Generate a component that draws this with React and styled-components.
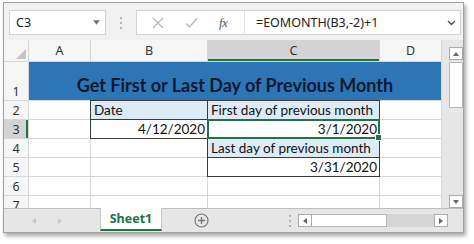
import React from "react";
import styled, { createGlobalStyle, css } from "styled-components";

const GREEN = "#217346";
const GRID = "#d6d6d6";

const GlobalStyle = createGlobalStyle`
  html, body { margin: 0; padding: 0; background: #ffffff; }
  body { width: 474px; height: 244px; overflow: hidden; }
  * { box-sizing: border-box; }
`;

const Page = styled.div`
  padding: 2px 0 0 3px;
`;

const Window = styled.div`
  width: 461px;
  height: 231px;
  border: 1px solid #a2a2a2;
  box-shadow: 2px 3px 4px rgba(0, 0, 0, 0.35);
  background: #f1f1f1;
  display: flex;
  flex-direction: column;
  overflow: hidden;
`;

/* ---------- formula bar ---------- */
const FormulaBar = styled.div`
  height: 37px;
  flex: none;
  display: flex;
  align-items: flex-start;
  padding: 7px 2px 0 5px;
  font-family: "Noto Sans", "Open Sans", sans-serif;
  font-size: 12.5px;
  color: #222;
`;

const NameBox = styled.div`
  width: 97px;
  height: 25px;
  background: #fff;
  border: 1px solid #d2d2d2;
  display: flex;
  align-items: center;
  justify-content: space-between;
  padding: 0 5px 0 6px;
`;

const Dots = styled.div`
  width: 30px;
  height: 25px;
  display: flex;
  flex-direction: column;
  align-items: center;
  justify-content: center;
  gap: 3px;
  span {
    width: 2px;
    height: 2px;
    background: #b4b4b4;
  }
`;

const FxBox = styled.div`
  flex: 1;
  height: 25px;
  background: #fff;
  border: 1px solid #d2d2d2;
  display: flex;
  align-items: center;
`;

const FxIcons = styled.div`
  width: 108px;
  height: 100%;
  display: flex;
  align-items: center;
  justify-content: space-around;
  padding: 0 6px 0 4px;
  border-right: 1px solid #e4e4e4;
`;

const FxLabel = styled.span`
  font-family: "Liberation Serif", serif;
  font-style: italic;
  font-size: 13px;
  color: #555;
  letter-spacing: -0.5px;
`;

const FormulaText = styled.div`
  flex: 1;
  display: flex;
  align-items: center;
  justify-content: space-between;
  padding: 0 4px 0 11px;
`;

/* ---------- sheet ---------- */
const SheetArea = styled.div`
  display: flex;
  height: 168px;
  flex: none;
`;

const Grid = styled.div`
  display: grid;
  grid-template-columns: 24px 61px 116px 171px 61px;
  grid-template-rows: 21px 38px repeat(6, 18px);
  gap: 1px;
  padding-right: 1px;
  background: ${GRID};
  height: 168px;
  overflow: hidden;
  font-family: "Lato", "Carlito", sans-serif;
`;

const HeadCell = styled.div`
  background: ${(p) => (p.$active ? "#d3d3d3" : "#f6f6f6")};
  color: #333;
  font-family: "Noto Sans", "Open Sans", sans-serif;
  font-size: 12.5px;
  display: flex;
  justify-content: center;
  align-items: ${(p) => (p.$row ? "flex-end" : "center")};
  line-height: 17px;
  ${(p) =>
    p.$active &&
    (p.$row
      ? css`box-shadow: inset -2px 0 0 ${GREEN};`
      : css`box-shadow: inset 0 -2px 0 ${GREEN};`)}
`;

const Corner = styled.div`
  background: #f6f6f6;
  position: relative;
  svg {
    position: absolute;
    right: 2px;
    bottom: 2px;
  }
`;

const Title = styled.div`
  grid-column: span 4;
  background: #2e75b6;
  color: #0b1a33;
  font-weight: 700;
  font-size: 18px;
  display: flex;
  align-items: flex-end;
  justify-content: center;
  padding-bottom: 4px;
`;

const Cell = styled.div`
  background: ${(p) => (p.$fill ? "#ddebf7" : "#fff")};
  color: #111;
  font-size: 13.5px;
  line-height: 18px;
  display: flex;
  align-items: flex-end;
  justify-content: ${(p) => (p.$right ? "flex-end" : "flex-start")};
  padding: 0 2px 0 3px;
  white-space: nowrap;
  position: relative;
  ${(p) =>
    p.$boxed &&
    css`
      outline: 1px solid #3a3a3a;
    `}
  ${(p) =>
    p.$selected &&
    css`
      outline: 2px solid ${GREEN};
      outline-offset: -1px;
      z-index: 2;
      &::after {
        content: "";
        position: absolute;
        right: -3px;
        bottom: -3px;
        width: 5px;
        height: 5px;
        background: ${GREEN};
        border: 1px solid #fff;
        box-sizing: content-box;
      }
    `}
`;

const VScroll = styled.div`
  width: 21px;
  flex: none;
  background: #e6e6e6;
  display: flex;
  flex-direction: column;
  padding: 7px 0 0 7px;
`;

const ScrollBtn = styled.div`
  width: 14px;
  height: 13px;
  background: #ffffff;
  border: 1px solid #ababab;
  display: flex;
  align-items: center;
  justify-content: center;
  flex: none;
`;

const VThumb = styled.div`
  width: 14px;
  height: 46px;
  margin-top: 2px;
  background: #fff;
  border: 1px solid #b5b5b5;
`;

const VTrack = styled.div`
  flex: 1;
`;

/* ---------- bottom tab bar ---------- */
const TabBar = styled.div`
  height: 24px;
  flex: none;
  display: flex;
  align-items: stretch;
  background: #e6e6e6;
  border-top: 1px solid #bdbdbd;
  font-family: "Noto Sans", "Open Sans", sans-serif;
`;

const NavArrows = styled.div`
  width: 96px;
  flex: none;
  display: flex;
  align-items: center;
  padding-left: 27px;
  gap: 20px;
`;

const SheetTab = styled.div`
  width: 62px;
  flex: none;
  margin-top: -1px;
  margin-bottom: 1px;
  background: #fff;
  border-left: 1px solid #c8c8c8;
  border-right: 1px solid #c8c8c8;
  border-bottom: 2px solid ${GREEN};
  color: ${GREEN};
  font-weight: 700;
  font-size: 12.5px;
  display: flex;
  align-items: center;
  justify-content: center;
`;

const AddSheet = styled.div`
  width: 80px;
  flex: none;
  display: flex;
  align-items: center;
  padding-left: 32px;
`;

const TabDots = styled.div`
  width: 17px;
  flex: none;
  display: flex;
  flex-direction: column;
  align-items: center;
  justify-content: center;
  gap: 3px;
  margin-left: 39px;
  span {
    width: 2px;
    height: 2px;
    background: #b4b4b4;
  }
`;

const HScroll = styled.div`
  display: flex;
  align-items: center;
  flex: none;
  width: 150px;
`;

const HThumb = styled.div`
  width: 75px;
  height: 13px;
  flex: none;
  background: #fff;
  border: 1px solid #b5b5b5;
  border-left: none;
`;

const HTrack = styled.div`
  flex: 1;
  height: 13px;
  background: #d6d6d6;
`;

const Tri = ({ dir = "down", color = "#666", size = 7 }) => {
  const pts = {
    down: "0,1 6,1 3,5",
    up: "0,5 6,5 3,1",
    left: "5,0 5,6 1,3",
    right: "1,0 1,6 5,3",
  }[dir];
  return (
    <svg width={size} height={size} viewBox="0 0 6 6">
      <polygon points={pts} fill={color} />
    </svg>
  );
};

const cols = ["A", "B", "C", "D"];

export default function App() {
  return (
    <>
      <GlobalStyle />
      <Page>
        <Window>
          <FormulaBar>
            <NameBox>
              <span>C3</span>
              <Tri dir="down" color="#777" size={7} />
            </NameBox>
            <Dots>
              <span />
              <span />
              <span />
            </Dots>
            <FxBox>
              <FxIcons>
                <svg width="12" height="12" viewBox="0 0 12 12">
                  <path d="M1 1 L11 11 M11 1 L1 11" stroke="#b8b8b8" strokeWidth="1.3" />
                </svg>
                <svg width="13" height="12" viewBox="0 0 13 12">
                  <path d="M1 6.5 L4.5 10 L12 1.5" stroke="#b8b8b8" strokeWidth="1.3" fill="none" />
                </svg>
                <FxLabel>fx</FxLabel>
              </FxIcons>
              <FormulaText>
                <span>=EOMONTH(B3,-2)+1</span>
                <svg width="9" height="6" viewBox="0 0 9 6">
                  <path d="M1 1 L4.5 4.5 L8 1" stroke="#555" strokeWidth="1.3" fill="none" />
                </svg>
              </FormulaText>
            </FxBox>
          </FormulaBar>

          <SheetArea>
            <Grid>
              <Corner>
                <svg width="10" height="10" viewBox="0 0 10 10">
                  <polygon points="10,0 10,10 0,10" fill="#c4c4c4" />
                </svg>
              </Corner>
              {cols.map((c) => (
                <HeadCell key={c} $active={c === "C"}>
                  {c}
                </HeadCell>
              ))}

              <HeadCell $row>1</HeadCell>
              <Title>Get First or Last Day of Previous Month</Title>

              <HeadCell $row>2</HeadCell>
              <Cell />
              <Cell $boxed $fill>Date</Cell>
              <Cell $boxed $fill>First day of previous month</Cell>
              <Cell />

              <HeadCell $row $active>3</HeadCell>
              <Cell />
              <Cell $boxed $right>4/12/2020</Cell>
              <Cell $boxed $selected $right>3/1/2020</Cell>
              <Cell />

              <HeadCell $row>4</HeadCell>
              <Cell />
              <Cell />
              <Cell $boxed $fill>Last day of previous month</Cell>
              <Cell />

              <HeadCell $row>5</HeadCell>
              <Cell />
              <Cell />
              <Cell $boxed $right>3/31/2020</Cell>
              <Cell />

              <HeadCell $row>6</HeadCell>
              <Cell />
              <Cell />
              <Cell />
              <Cell />

              <HeadCell $row>7</HeadCell>
              <Cell />
              <Cell />
              <Cell />
              <Cell />
            </Grid>
            <VScroll>
              <ScrollBtn>
                <Tri dir="up" color="#666" size={6} />
              </ScrollBtn>
              <VThumb />
              <VTrack />
              <ScrollBtn>
                <Tri dir="down" color="#666" size={6} />
              </ScrollBtn>
            </VScroll>
          </SheetArea>

          <TabBar>
            <NavArrows>
              <Tri dir="left" color="#c8c8c8" size={6} />
              <Tri dir="right" color="#c8c8c8" size={6} />
            </NavArrows>
            <SheetTab>Sheet1</SheetTab>
            <AddSheet>
              <svg width="15" height="15" viewBox="0 0 15 15">
                <circle cx="7.5" cy="7.5" r="6.5" stroke="#777" strokeWidth="1.2" fill="none" />
                <path d="M7.5 4 V11 M4 7.5 H11" stroke="#777" strokeWidth="1.4" />
              </svg>
            </AddSheet>
            <TabDots>
              <span />
              <span />
              <span />
            </TabDots>
            <HScroll>
              <ScrollBtn>
                <Tri dir="left" color="#666" size={6} />
              </ScrollBtn>
              <HThumb />
              <HTrack />
              <ScrollBtn>
                <Tri dir="right" color="#666" size={6} />
              </ScrollBtn>
            </HScroll>
          </TabBar>
        </Window>
      </Page>
    </>
  );
}
